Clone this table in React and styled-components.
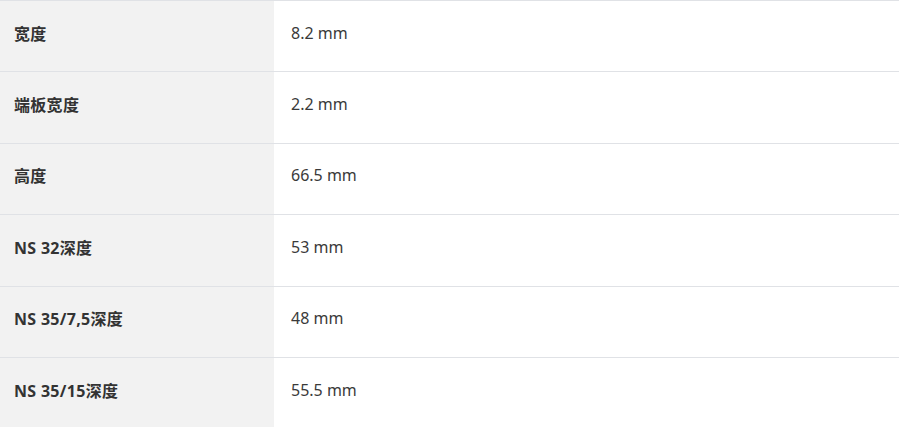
import styled, { createGlobalStyle } from "styled-components";

const GlobalStyle = createGlobalStyle`
  html, body {
    margin: 0;
    padding: 0;
    background: #ffffff;
  }
  body {
    font-family: "Noto Sans", "Noto Sans CJK SC", sans-serif;
    color: #333333;
  }
`;

const Table = styled.div`
  display: flex;
  flex-direction: column;
  width: 899px;
`;

const TableRow = styled.div`
  display: grid;
  grid-template-columns: 274px 1fr;
  height: 71.4px;
  border-top: 1px solid #e0e2e6;
  box-sizing: border-box;
`;

const Label = styled.div`
  display: flex;
  align-items: center;
  padding: 0 0 7px 14px;
  background: #f2f2f2;
  font-size: 16px;
  font-weight: 700;
  letter-spacing: 0.3px;
  color: #333333;
`;

const Value = styled.div`
  display: flex;
  align-items: center;
  padding: 0 0 7px 17px;
  font-size: 16px;
  font-weight: 400;
  color: #3a3a3a;
`;

const specs = [
  { label: "宽度", value: "8.2 mm" },
  { label: "端板宽度", value: "2.2 mm" },
  { label: "高度", value: "66.5 mm" },
  { label: "NS 32深度", value: "53 mm" },
  { label: "NS 35/7,5深度", value: "48 mm" },
  { label: "NS 35/15深度", value: "55.5 mm" },
];

export default function App() {
  return (
    <>
      <GlobalStyle />
      <Table role="table">
        {specs.map((s) => (
          <TableRow role="row" key={s.label}>
            <Label>{s.label}</Label>
            <Value>{s.value}</Value>
          </TableRow>
        ))}
      </Table>
    </>
  );
}
